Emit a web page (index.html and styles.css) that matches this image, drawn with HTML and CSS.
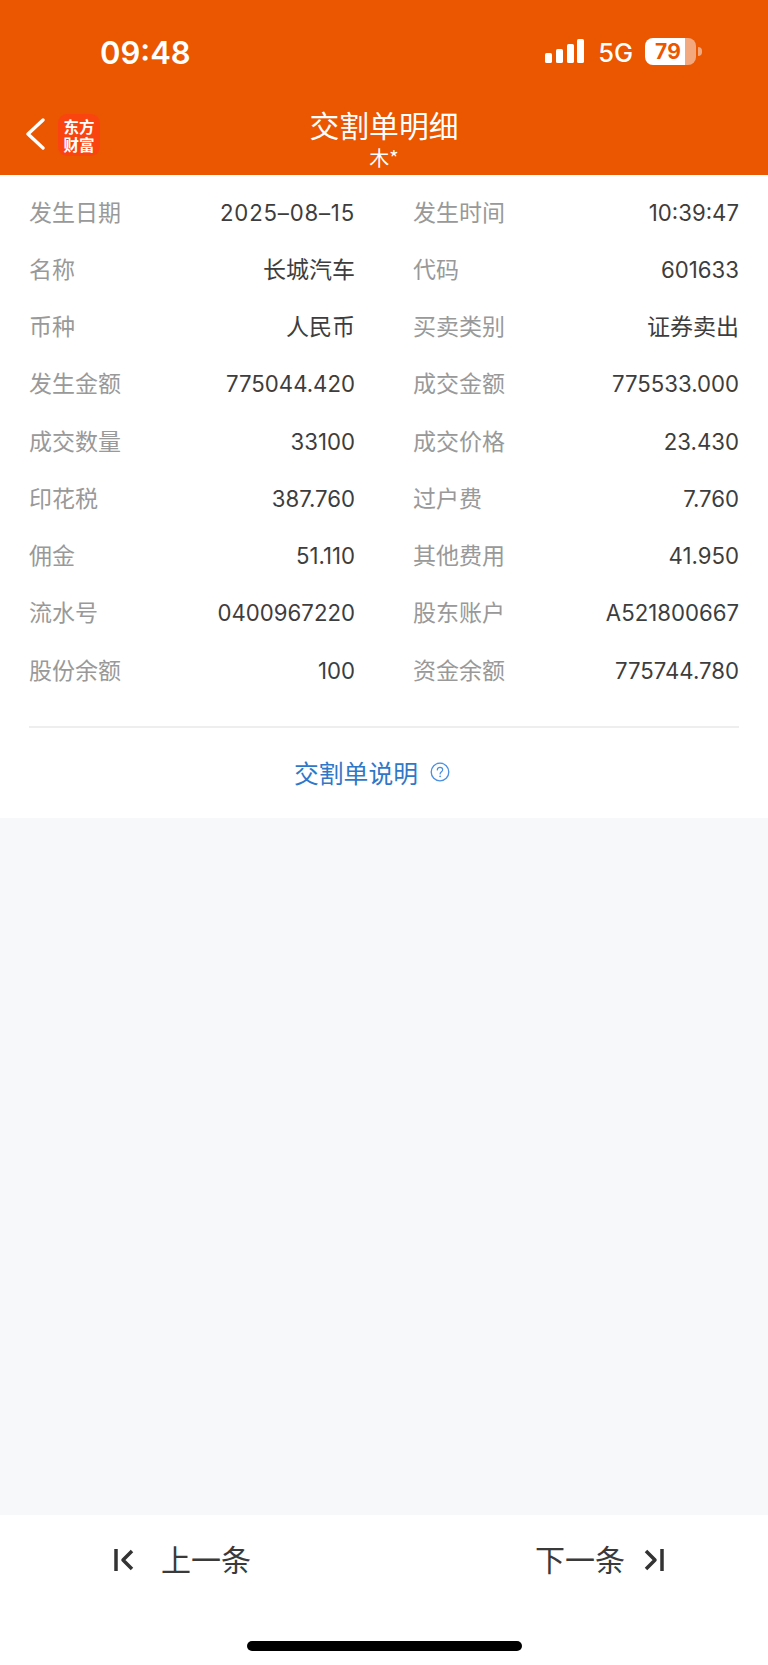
FILE: index.html
```html
<!DOCTYPE html>
<html lang="zh-CN">
<head>
<meta charset="utf-8">
<title>交割单明细</title>
<link rel="stylesheet" href="styles.css">
</head>
<body>
<div class="page">
  <header class="header">
    <div class="status">
      <span class="time">09:48</span>
      <div class="status-right">
        <svg class="signal" width="39" height="26" viewBox="0 0 39 26"><rect x="0" y="15" width="7" height="10" rx="1.6"/><rect x="11" y="11" width="7" height="14" rx="1.6"/><rect x="22" y="6" width="7" height="19" rx="1.6"/><rect x="32" y="1" width="7" height="24" rx="1.6"/></svg>
        <span class="net">5G</span>
        <div class="battery"><span class="battery-num">79</span></div>
        <span class="battery-nub"></span>
      </div>
    </div>
    <nav class="nav">
      <div class="nav-left">
        <svg class="back" width="20" height="32" viewBox="0 0 20 32"><path d="M18 2 L3 16 L18 30" fill="none" stroke="#fff" stroke-width="3.4" stroke-linecap="round" stroke-linejoin="round"/></svg>
        <div class="logo"><span>东方</span><span>财富</span></div>
      </div>
      <div class="nav-title">
        <div class="title">交割单明细</div>
        <div class="subtitle">木*</div>
      </div>
    </nav>
  </header>

  <main class="card">
    <div class="grid">
      <div class="row"><span class="k">发生日期</span><span class="v date">2025–08–15</span></div>
      <div class="row"><span class="k">发生时间</span><span class="v">10:39:47</span></div>
      <div class="row"><span class="k">名称</span><span class="v cjk">长城汽车</span></div>
      <div class="row"><span class="k">代码</span><span class="v">601633</span></div>
      <div class="row"><span class="k">币种</span><span class="v cjk">人民币</span></div>
      <div class="row"><span class="k">买卖类别</span><span class="v cjk">证券卖出</span></div>
      <div class="row"><span class="k">发生金额</span><span class="v">775044.420</span></div>
      <div class="row"><span class="k">成交金额</span><span class="v">775533.000</span></div>
      <div class="row"><span class="k">成交数量</span><span class="v">33100</span></div>
      <div class="row"><span class="k">成交价格</span><span class="v">23.430</span></div>
      <div class="row"><span class="k">印花税</span><span class="v">387.760</span></div>
      <div class="row"><span class="k">过户费</span><span class="v">7.760</span></div>
      <div class="row"><span class="k">佣金</span><span class="v">51.110</span></div>
      <div class="row"><span class="k">其他费用</span><span class="v">41.950</span></div>
      <div class="row"><span class="k">流水号</span><span class="v">0400967220</span></div>
      <div class="row"><span class="k">股东账户</span><span class="v">A521800667</span></div>
      <div class="row"><span class="k">股份余额</span><span class="v">100</span></div>
      <div class="row"><span class="k">资金余额</span><span class="v">775744.780</span></div>
    </div>
    <div class="link-row">
      <span class="link">交割单说明</span>
      <svg class="help" width="20" height="20" viewBox="0 0 20 20"><circle cx="10" cy="10" r="8.800" fill="none" stroke="#4a8fe0" stroke-width="1.300"/><path d="M7.300 7.900 C7.300 6.200 8.500 5.300 10 5.300 C11.600 5.300 12.700 6.300 12.700 7.700 C12.700 9.700 10.100 9.700 10.100 11.900" fill="none" stroke="#4a8fe0" stroke-width="1.200" stroke-linecap="round"/><circle cx="10.100" cy="14.300" r=".9" fill="#4a8fe0"/></svg>
    </div>
  </main>

  <div class="spacer"></div>

  <footer class="footer">
    <div class="pager">
      <div class="pager-btn">
        <svg class="pager-icon" width="20" height="24" viewBox="0 0 20 24"><path d="M2 1 V23" stroke="#333" stroke-width="3.500" fill="none"/><path d="M18 3 L9 12 L18 21" stroke="#333" stroke-width="3.500" fill="none" stroke-linejoin="round"/></svg>
        <span class="pager-label">上一条</span>
      </div>
      <div class="pager-btn next">
        <span class="pager-label">下一条</span>
        <svg class="pager-icon" width="20" height="24" viewBox="0 0 20 24"><path d="M18 1 V23" stroke="#333" stroke-width="3.500" fill="none"/><path d="M2 3 L11 12 L2 21" stroke="#333" stroke-width="3.500" fill="none" stroke-linejoin="round"/></svg>
      </div>
    </div>
    <div class="home-bar"></div>
  </footer>
</div>
</body>
</html>
```
FILE: styles.css
```css
* { box-sizing: border-box; }
html, body { margin: 0; padding: 0; }
body {
  font-family: "Noto Sans CJK SC", sans-serif;
  background: #f7f8fa;
  color: #333;
}
.page { width: 768px; height: 1665px; display: flex; flex-direction: column; }

.header { height: 175px; background: #eb5600; color: #fff; flex: none; }
.status { height: 103px; display: flex; justify-content: space-between; align-items: flex-start; padding: 35px 66px 0 100px; }
.time { font-family: "Inter", sans-serif; font-size: 31px; font-weight: 600; line-height: 36px; }
.status-right { display: flex; align-items: center; height: 32px; }
.signal { fill: #fff; margin-right: 14px; }
.net { font-family: "Inter", sans-serif; font-size: 25.500px; line-height: 32px; padding-top: 4px; margin-right: 12px; font-weight: 500; }
.battery { width: 51px; height: 27px; border-radius: 8px; background: linear-gradient(to right, #fff 0 40px, #f4a87d 40px); display: flex; align-items: center; padding-left: 10px; }
.battery-num { font-family: "Inter", sans-serif; color: #eb5600; font-size: 21px; font-weight: 700; line-height: 27px; letter-spacing: .3px; }
.battery-nub { width: 4px; height: 9px; margin-left: 2px; background: #f4a87d; border-radius: 0 4px 4px 0; }

.nav { height: 72px; display: grid; grid-template-columns: 1fr auto 1fr; }
.nav-left { display: flex; align-items: flex-start; padding: 11px 0 0 25px; }
.back { margin-top: 4px; }
.logo { width: 42px; height: 42px; margin-left: 13px; border-radius: 9px; background: #fa4410; display: flex; flex-direction: column; align-items: center; justify-content: center; font-size: 15.500px; line-height: 18px; font-weight: 700; color: #fff; }
.nav-title { text-align: center; }
.title { font-size: 29.800px; line-height: 38px; margin-top: 2px; font-weight: 400; }
.subtitle { font-size: 20px; line-height: 24px; margin-top: 3px; }

.card { background: #fff; padding: 9px 29px 0; height: 643px; flex: none; }
.grid { display: grid; grid-template-columns: 326px 326px; column-gap: 58px; grid-auto-rows: 57.25px; }
.row { display: flex; justify-content: space-between; align-items: center; font-size: 23px; line-height: 30px; }
.k { color: #999; padding-bottom: 4px; }
.v { color: #3d3d3d; font-family: "Inter", sans-serif; font-size: 22.200px; }
.v.date { letter-spacing: .8px; }
.v.cjk { font-family: "Noto Sans CJK SC", sans-serif; font-size: 23px; padding-bottom: 4px; }
.link-row { margin-top: 27px; border-top: 2px solid #eeeeee; height: 90px; display: flex; justify-content: center; align-items: center; gap: 12px; padding-right: 24px; }
.link { color: #2f78c8; font-size: 24.800px; }
.spacer { flex: 1; }

.footer { background: #fff; height: 150px; flex: none; display: flex; flex-direction: column; }
.pager { display: flex; justify-content: space-between; padding: 23px 104px 0 114px; }
.pager-btn { display: flex; align-items: center; gap: 27px; font-size: 30px; line-height: 40px; color: #3a3a3a; }
.pager-btn.next { gap: 19px; }
.pager-label { padding-bottom: 4px; }
.home-bar { width: 275px; height: 10px; border-radius: 5px; background: #000; margin: 59px auto 0; }
```
